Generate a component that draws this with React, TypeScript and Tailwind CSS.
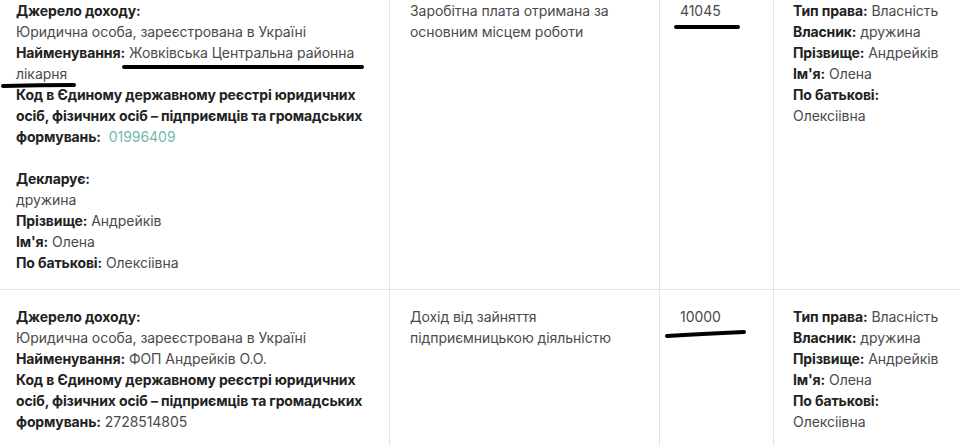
import React from "react";

type Row = {
  source: string;
  name: string;
  code: string;
  codeLink?: boolean;
  declarant?: boolean;
  income: string;
  amount: string;
};

const ROWS: Row[] = [
  {
    source: "Юридична особа, зареєстрована в Україні",
    name: "Жовківська Центральна районна лікарня",
    code: "01996409",
    codeLink: true,
    declarant: true,
    income: "Заробітна плата отримана за основним місцем роботи",
    amount: "41045",
  },
  {
    source: "Юридична особа, зареєстрована в Україні",
    name: "ФОП Андрейків О.О.",
    code: "2728514805",
    income: "Дохід від зайняття підприємницькою діяльністю",
    amount: "10000",
  },
];

function Label({ children }: { children: React.ReactNode }) {
  return <span className="font-bold text-[#222] tracking-[-0.12px]">{children}</span>;
}

function Owner() {
  return (
    <div>
      <div><Label>Тип права:</Label> Власність</div>
      <div><Label>Власник:</Label> дружина</div>
      <div><Label>Прізвище:</Label> Андрейків</div>
      <div><Label>Ім'я:</Label> Олена</div>
      <div><Label>По батькові:</Label> Олексіівна</div>
    </div>
  );
}

export default function App() {
  return (
    <div className="relative w-[960px] h-[446px] overflow-hidden bg-white text-[14px] leading-[21px] tracking-[-0.05px] text-[#4a4a4a] font-['Inter','Noto_Sans',sans-serif]">
      <div className="-mt-[16px]">
        {ROWS.map((row, i) => (
          <div
            key={row.amount}
            className={`grid grid-cols-[390px_270px_114px_1fr] ${i > 0 ? "border-t border-[#e3e3e3]" : ""}`}
          >
            {/* Source */}
            <div className="border-r border-[#e3e3e3] px-[16px] py-[16px]">
              <div>
                <div><Label>Джерело доходу:</Label></div>
                <div>{row.source}</div>
                <div><Label>Найменування:</Label> {row.name}</div>
                <div>
                  <Label>Код в Єдиному державному реєстрі юридичних осіб, фізичних осіб – підприємців та громадських формувань:</Label>{" "}
                  <span className={row.codeLink ? "text-[#72b9ad] ml-[4px]" : ""}>{row.code}</span>
                </div>
              </div>
              {row.declarant && (
                <div className="mt-[21px]">
                  <div><Label>Декларує:</Label></div>
                  <div>дружина</div>
                  <div><Label>Прізвище:</Label> Андрейків</div>
                  <div><Label>Ім'я:</Label> Олена</div>
                  <div><Label>По батькові:</Label> Олексіівна</div>
                </div>
              )}
            </div>

            {/* Income type */}
            <div className="border-r border-[#e3e3e3] px-[20px] py-[16px]">{row.income}</div>

            {/* Amount */}
            <div className="border-r border-[#e3e3e3] px-[20px] py-[16px]">{row.amount}</div>

            {/* Owner */}
            <div className="pl-[19px] pr-[7px] py-[16px]">
              <Owner />
            </div>
          </div>
        ))}
      </div>

      {/* marker underlines */}
      <svg className="absolute inset-0 pointer-events-none" width="960" height="446">
        <g stroke="#000" strokeWidth="4" strokeLinecap="round" fill="none">
          <path d="M124 67 L362 67" />
          <path d="M3 86 Q40 85 74 85" />
          <path d="M676 27 L738 27" />
          <path d="M667 336 Q700 334 744 332" />
        </g>
      </svg>
    </div>
  );
}
